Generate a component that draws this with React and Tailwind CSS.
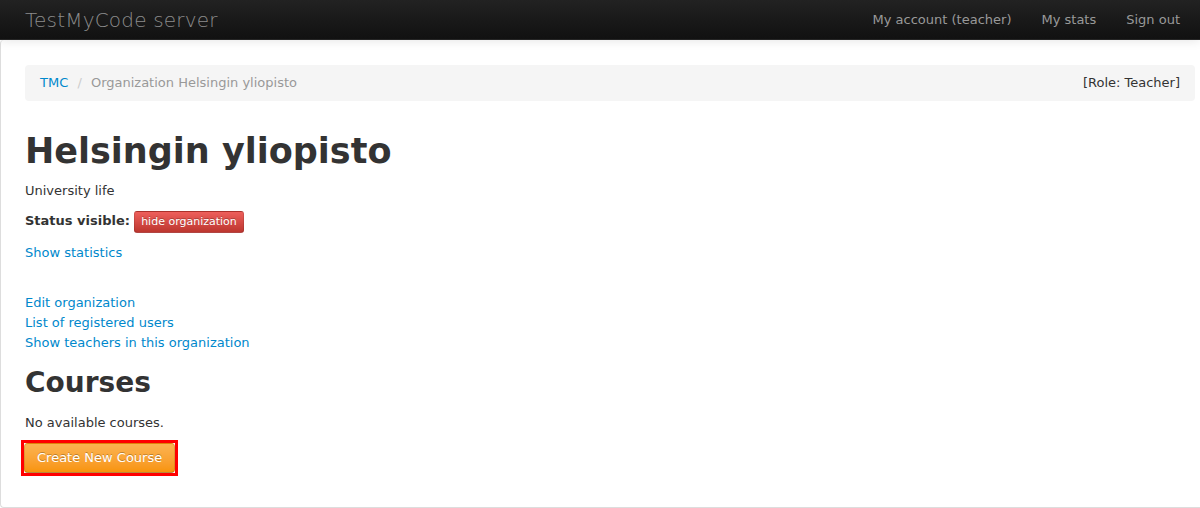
import React from "react";

const navLinks = ["My account (teacher)", "My stats", "Sign out"];

export default function App() {
  return (
    <div className="min-h-[508px] bg-white text-[13px] leading-5 text-[#333] [font-family:'DejaVu_Sans',sans-serif]">
      {/* Top navbar */}
      <div className="relative z-10 flex h-10 items-center justify-between border-b border-[#252525] bg-gradient-to-b from-[#222] to-[#111] shadow-[0_1px_10px_rgba(0,0,0,0.1)]">
        <a className="pl-[25px] text-[20px] font-extralight leading-5 tracking-[0.2px] text-[#8c8c8c] [font-family:'DejaVu_Sans_ExtraLight','DejaVu_Sans',sans-serif]">
          TestMyCode server
        </a>
        <ul className="flex pr-[5px]">
          {navLinks.map((label) => (
            <li key={label}>
              <a className="block px-[15px] py-[10px] text-[#999]">{label}</a>
            </li>
          ))}
        </ul>
      </div>

      {/* Page card */}
      <div className="box-border h-[468px] rounded-tl-[4px] rounded-bl-[4px] border-b border-l border-[#ddd] bg-white pt-[25px] pr-[5px] pl-[24px]">
        <ul className="mb-[30px] flex items-center justify-between rounded-[4px] bg-[#f5f5f5] px-[15px] py-2">
          <li>
            <a className="text-[#0088cc]">TMC</a>{" "}
            <span className="px-[5px] text-[#ccc]">/</span>{" "}
            <span className="text-[#999]">Organization Helsingin yliopisto</span>
          </li>
          <li>[Role: Teacher]</li>
        </ul>

        <h1 className="mb-[10px] text-[35px] leading-10 font-bold">Helsingin yliopisto</h1>
        <p className="mb-[10px]">University life</p>
        <p className="mb-[10px]">
          <b>Status visible:</b>{" "}
          <button className="rounded-[3px] border border-[rgba(0,0,0,0.1)] border-b-[rgba(0,0,0,0.25)] bg-gradient-to-b from-[#ee5f5b] to-[#bd362f] px-[6px] text-[11px] leading-5 text-white [text-shadow:0_-1px_0_rgba(0,0,0,0.25)]">
            hide organization
          </button>
        </p>
        <p className="mb-[10px]">
          <a className="text-[#0088cc]">Show statistics</a>
        </p>
        <div className="h-5" />
        <div className="flex flex-col items-start">
          <a className="text-[#0088cc]">Edit organization</a>
          <a className="text-[#0088cc]">List of registered users</a>
          <a className="text-[#0088cc]">Show teachers in this organization</a>
        </div>

        <h2 className="my-[10px] text-[28px] leading-10 font-bold">Courses</h2>
        <p className="mb-[10px]">No available courses.</p>
        <div className="-mt-[3px] -ml-[4px]">
          <span className="inline-block border-[3px] border-[#ff0000] align-top">
            <button className="block rounded-[4px] border border-[rgba(0,0,0,0.1)] border-b-[rgba(0,0,0,0.25)] bg-gradient-to-b from-[#fbb450] to-[#f89406] px-3 py-1 text-[13px] leading-5 text-white [text-shadow:0_-1px_0_rgba(0,0,0,0.25)]">
              Create New Course
            </button>
          </span>
        </div>
      </div>
    </div>
  );
}
